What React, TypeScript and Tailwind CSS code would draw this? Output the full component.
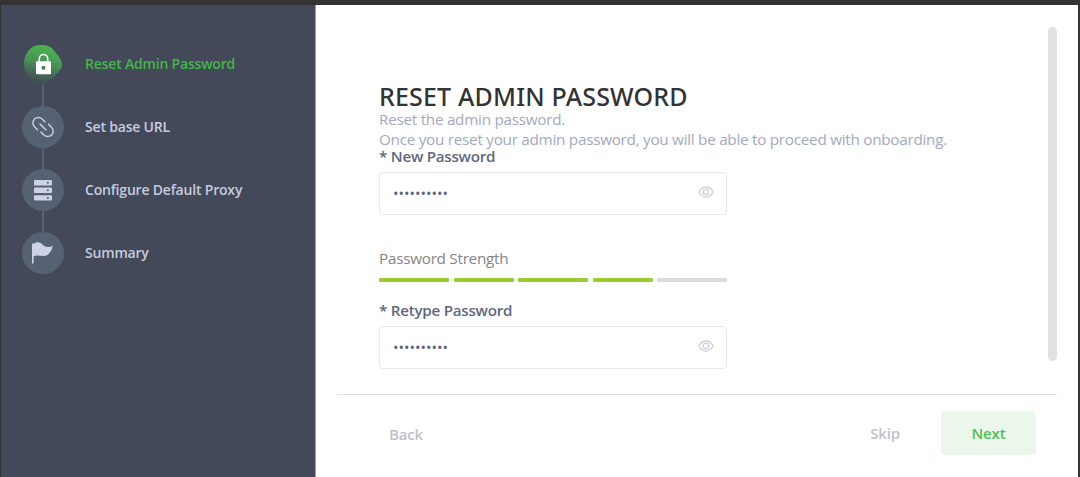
import type { ReactNode } from 'react';

const LockIcon = () => (
  <svg width="38" height="38" viewBox="0 0 38 38">
    <defs>
      <linearGradient id="blob" x1="0.65" y1="0" x2="0.4" y2="1">
        <stop offset="0.1" stopColor="#4caf50" />
        <stop offset="0.5" stopColor="#489455" stopOpacity="0.95" />
        <stop offset="1" stopColor="#46705a" stopOpacity="0.15" />
      </linearGradient>
    </defs>
    <path
      d="M17 0C22 0 26.500 1.200 29.500 5C32 8.500 38 13.500 38 19C38 24.500 34 28 30 31.500C26 35 23.500 38 19 38C13 38 8 35.500 4.500 31.500C1 28 0 24 0 19C0 13 1.500 10 4 6.500C7 2 11 0 17 0Z"
      fill="url(#blob)"
    />
    <path d="M15.300 16.500V13.700A4.200 4.200 0 0 1 23.700 13.700V16.500" fill="none" stroke="#fff" strokeWidth="1.600" />
    <path
      fillRule="evenodd"
      fill="#fff"
      d="M13 16.200H26A1 1 0 0 1 27 17.200V28.300A1 1 0 0 1 26 29.300H13A1 1 0 0 1 12 28.300V17.200A1 1 0 0 1 13 16.200ZM19.500 20.800A2 2 0 1 0 19.500 24.800A2 2 0 1 0 19.500 20.800Z"
    />
  </svg>
);

const LinkIcon = () => (
  <svg width="22" height="22" viewBox="0 0 22 22" fill="none" stroke="#c5cbe0" strokeWidth="1.500" strokeLinecap="round">
    <path d="M5.400 13.600L2.500 10.700A5.400 5.400 0 0 1 2.500 3A5.400 5.400 0 0 1 10.100 3L13 5.900" />
    <path d="M16.600 8.400L19.500 11.300A5.400 5.400 0 0 1 19.500 19A5.400 5.400 0 0 1 11.900 19L9 16.100" />
    <path d="M8.100 8.100L14 14" />
  </svg>
);

const ServerIcon = () => (
  <svg width="18" height="21" viewBox="0 0 18 21" fill="#cdd2e6">
    {[0, 7.6, 15.2].map((y) => (
      <g key={y}>
        <rect y={y} width="18" height="5.400" rx="1" />
        <circle cx="13.800" cy={y + 2.7} r="1" fill="#566273" />
      </g>
    ))}
  </svg>
);

const FlagIcon = () => (
  <svg width="22" height="22" viewBox="0 0 22 22" fill="#cdd2e6">
    <path d="M0 1.800Q0.700 1 1.500 1.800C4.500 -0.600 8 -0.400 10.500 2.600C13 5.200 17 5.600 20.700 3.700C19.800 8.600 17 13.700 12 14C8.500 14.200 5.500 12.400 1.600 14.300V21.500H0Z" />
  </svg>
);

const EyeIcon = () => (
  <svg width="16" height="12" viewBox="0 0 16 12" fill="none" stroke="#cdd1da" strokeWidth="1.300">
    <path d="M0.800 6C2.600 2.800 5 1 8 1S13.400 2.800 15.200 6C13.400 9.200 11 11 8 11S2.600 9.200 0.800 6Z" />
    <circle cx="8" cy="6" r="2.800" />
  </svg>
);

function Step({ icon, label, active, last }: { icon: ReactNode; label: string; active?: boolean; last?: boolean }) {
  return (
    <li className="flex h-[63px] gap-[21px]">
      <div className="flex w-[42px] shrink-0 flex-col items-center">
        <div className={active ? 'flex size-[42px] shrink-0 items-center justify-center pr-px' : 'flex size-[42px] shrink-0 items-center justify-center rounded-full bg-[#566273]'}>
          {icon}
        </div>
        {!last && <div className="w-[1.500px] flex-1 bg-[#566273]" />}
      </div>
      <span className={active ? 'h-[42px] whitespace-nowrap text-[14px] font-semibold leading-[42px] tracking-[-0.19px] text-[#43b649]' : 'h-[42px] whitespace-nowrap text-[14px] font-semibold leading-[42px] tracking-[-0.19px] text-[#c5cbe0]'}>
        {label}
      </span>
    </li>
  );
}

function PasswordField({ label }: { label: string }) {
  return (
    <label className="block w-[348px]">
      <span className="block h-[25px] text-[15.200px] font-semibold leading-[18px] tracking-[-0.26px] text-[#5f6880]">* {label}</span>
      <span className="flex h-[43px] items-center justify-between rounded border-[1.500px] border-[#e6e9f3] pr-3 pb-[3px] pl-[13px]">
        <input type="password" readOnly defaultValue="onboarding" className="w-60 pt-[4px] text-[14.600px] text-[#5c6680] outline-none" />
        <EyeIcon />
      </span>
    </label>
  );
}

export default function App() {
  return (
    <div className="flex h-[477px] w-[1080px] overflow-hidden bg-[#333333] pt-[5px] pl-px font-['Open_Sans','Noto_Sans',sans-serif]">
      <aside className="w-[315px] shrink-0 border-r border-[#9a9da5] bg-[#434958] pt-[38px] pl-[21px]">
        <ol>
          <Step icon={<LockIcon />} label="Reset Admin Password" active />
          <Step icon={<LinkIcon />} label="Set base URL" />
          <Step icon={<ServerIcon />} label="Configure Default Proxy" />
          <Step icon={<FlagIcon />} label="Summary" last />
        </ol>
      </aside>
      <main className="flex w-[762px] flex-col bg-white pr-[21px] pl-[21px]">
        <div className="flex h-[390px] justify-between border-b border-[#e0e0e0] pt-[22px]">
          <section className="pt-[54px] pl-[42px]">
            <h1 className="h-[28px] whitespace-nowrap font-['Noto_Sans',sans-serif] text-[25px] font-medium leading-[30px] tracking-[0.18px] text-[#333333]">
              RESET ADMIN PASSWORD
            </h1>
            <p className="h-[38px] whitespace-nowrap text-[15.300px] leading-[20px] tracking-[-0.285px] text-[#a4a9bd]">
              Reset the admin password.
              <br />
              Once you reset your admin password, you will be able to proceed with onboarding.
            </p>
            <PasswordField label="New Password" />
            <div className="h-[86px] w-[348px] pt-[33px]">
              <p className="h-[30px] text-[15.300px] leading-[20px] tracking-[-0.285px] text-[#858585]">Password Strength</p>
              <div className="flex justify-between">
                <div className="h-1 w-[70px] rounded-[1px] bg-[#9acd32]" />
                <div className="h-1 w-[60px] rounded-[1px] bg-[#9acd32]" />
                <div className="h-1 w-[70px] rounded-[1px] bg-[#9acd32]" />
                <div className="h-1 w-[60px] rounded-[1px] bg-[#9acd32]" />
                <div className="h-1 w-[70px] rounded-[1px] bg-[#dcdcdc]" />
              </div>
            </div>
            <PasswordField label="Retype Password" />
          </section>
          <div className="h-[334px] w-[9px] rounded-full bg-[#e2e2e2]" />
        </div>
        <footer className="flex items-center pt-[16px] pr-[21px] pl-[52px] text-[15px] font-semibold tracking-[-0.14px] text-[#bfc1c7]">
          <button className="pt-[2px]">Back</button>
          <button className="ml-auto">Skip</button>
          <button className="ml-[41px] h-[44px] w-[95px] rounded bg-[#ecf7ec] text-[#4fbf55]">Next</button>
        </footer>
      </main>
    </div>
  );
}
